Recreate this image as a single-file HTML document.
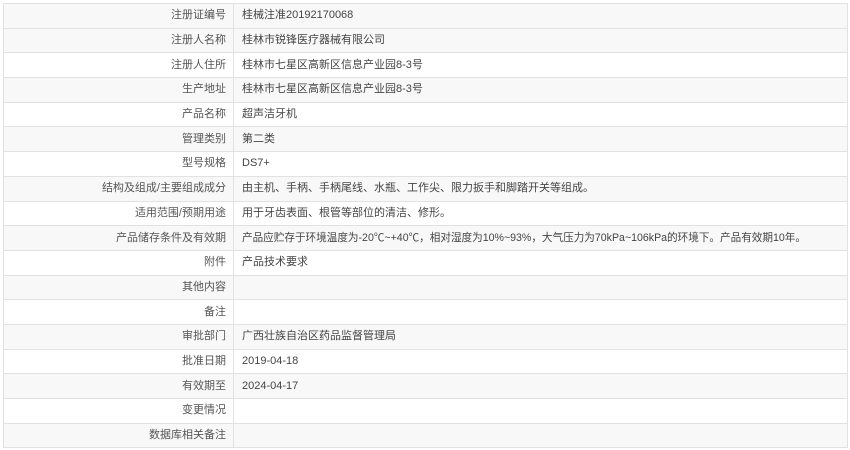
<!DOCTYPE html>
<html><head><meta charset="utf-8"><style>
body{margin:0;background:#fff;font-family:"Liberation Sans","Noto Sans CJK SC",sans-serif;font-size:11px;color:#444;}
table{position:absolute;left:3px;top:3px;width:845px;border-collapse:collapse;table-layout:fixed;}
td{height:23.7px;border:1px solid #e2e2e2;padding:0;line-height:23px;white-space:nowrap;overflow:hidden;}
td.l{text-align:right;padding-right:7px;color:#555;}
td.v{padding-left:8px;color:#444;}
td.s{font-size:10.6px;}
tr.g td{background:#f8f8f8;}
</style></head><body>
<table>
<colgroup><col style="width:230px"><col></colgroup>
<tr class="g"><td class="l">注册证编号</td><td class="v">桂械注准20192170068</td></tr>
<tr class="g"><td class="l">注册人名称</td><td class="v">桂林市锐锋医疗器械有限公司</td></tr>
<tr><td class="l">注册人住所</td><td class="v">桂林市七星区高新区信息产业园8-3号</td></tr>
<tr class="g"><td class="l">生产地址</td><td class="v">桂林市七星区高新区信息产业园8-3号</td></tr>
<tr><td class="l">产品名称</td><td class="v">超声洁牙机</td></tr>
<tr class="g"><td class="l">管理类别</td><td class="v">第二类</td></tr>
<tr><td class="l">型号规格</td><td class="v">DS7+</td></tr>
<tr class="g"><td class="l">结构及组成/主要组成成分</td><td class="v">由主机、手柄、手柄尾线、水瓶、工作尖、限力扳手和脚踏开关等组成。</td></tr>
<tr><td class="l">适用范围/预期用途</td><td class="v">用于牙齿表面、根管等部位的清洁、修形。</td></tr>
<tr class="g"><td class="l">产品储存条件及有效期</td><td class="v s">产品应贮存于环境温度为-20℃~+40℃，相对湿度为10%~93%，大气压力为70kPa~106kPa的环境下。产品有效期10年。</td></tr>
<tr><td class="l">附件</td><td class="v">产品技术要求</td></tr>
<tr class="g"><td class="l">其他内容</td><td class="v"></td></tr>
<tr><td class="l">备注</td><td class="v"></td></tr>
<tr class="g"><td class="l">审批部门</td><td class="v">广西壮族自治区药品监督管理局</td></tr>
<tr><td class="l">批准日期</td><td class="v">2019-04-18</td></tr>
<tr class="g"><td class="l">有效期至</td><td class="v">2024-04-17</td></tr>
<tr><td class="l">变更情况</td><td class="v"></td></tr>
<tr class="g"><td class="l">数据库相关备注</td><td class="v"></td></tr>
</table>
</body></html>
